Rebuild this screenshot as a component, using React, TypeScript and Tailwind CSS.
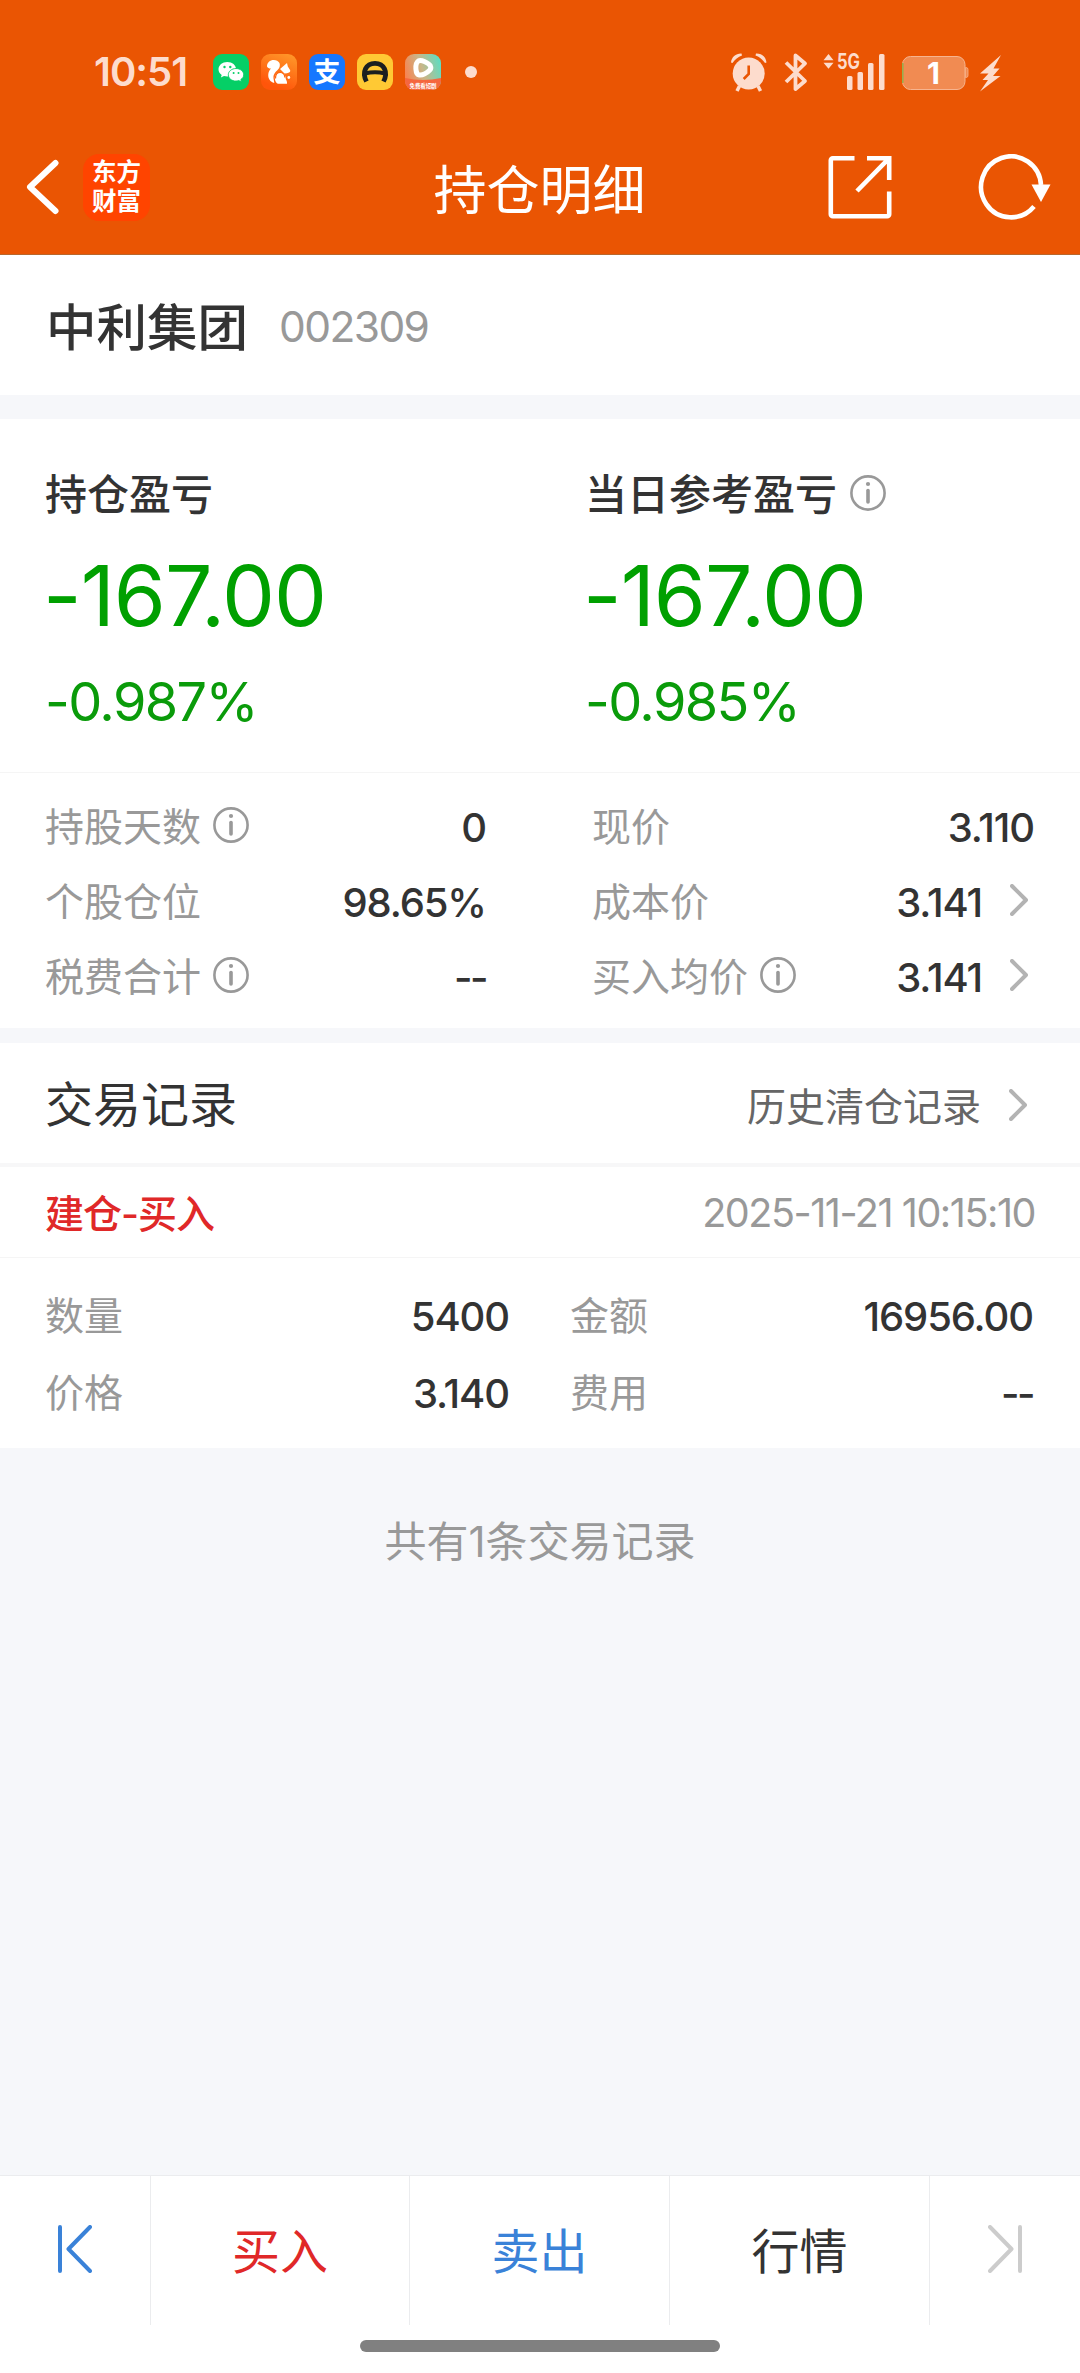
import { ReactNode } from "react";
import clsx from "clsx";

interface Metric {
	label: string;
	value: string;
	info?: boolean;
	link?: boolean;
}

const leftMetrics: Metric[] = [
	{ label: "持股天数", value: "0", info: true },
	{ label: "个股仓位", value: "98.65%" },
	{ label: "税费合计", value: "--", info: true },
];

const rightMetrics: Metric[] = [
	{ label: "现价", value: "3.110" },
	{ label: "成本价", value: "3.141", link: true },
	{ label: "买入均价", value: "3.141", info: true, link: true },
];

const InfoIcon = () => (
	<svg className="size-9 shrink-0" viewBox="0 0 36 36" fill="none" stroke="#999" strokeWidth="2.6">
		<circle cx="18" cy="18" r="16.6" />
		<circle cx="18" cy="9" r="2.1" fill="#999" stroke="none" />
		<path d="M18 15.5v11.5" strokeWidth="3.6" strokeLinecap="round" />
	</svg>
);

const ChevronRight = () => (
	<svg className="h-8 w-[18px] shrink-0" viewBox="0 0 18 32" fill="none" stroke="#b3b3b3" strokeWidth="4">
		<path d="M2 2l14 14L2 30" strokeLinecap="round" strokeLinejoin="round" />
	</svg>
);

/* ステータスバー */
const StatusBar = () => (
	<div className="flex h-[120px] items-start pl-[94px] pr-[76px] pt-[54px] text-[#fddccd]">
		<span className="w-[119px] text-[40px] font-semibold leading-9 tracking-[-1px]">10:51</span>
		<div className="flex gap-3">
			<svg className="size-9" viewBox="0 0 36 36">
				<rect width="36" height="36" rx="9" fill="#05cf66" />
				<path d="M14.3 8c-5 0-8.8 3.2-8.8 7.3 0 2.3 1.2 4.3 3.2 5.6l-.8 2.7 3.1-1.6c1 .3 2.1.5 3.3.5 5 0 8.8-3.1 8.8-7.2S19.3 8 14.3 8z" fill="#fff" />
				<path d="M23 14.5c-4.3 0-7.7 2.8-7.7 6.3s3.4 6.3 7.7 6.3c1 0 2-.2 2.8-.5l2.7 1.4-.7-2.4c1.8-1.2 2.9-2.9 2.9-4.8 0-3.5-3.4-6.3-7.7-6.3z" fill="#fff" stroke="#05cf66" strokeWidth=".9" />
				<g fill="#05cf66">
					<circle cx="11.5" cy="13" r="1.2" />
					<circle cx="17.3" cy="13" r="1.2" />
					<circle cx="20.6" cy="19" r="1" />
					<circle cx="25.5" cy="19" r="1" />
				</g>
			</svg>
			<svg className="size-9" viewBox="0 0 36 36">
				<defs>
					<linearGradient id="squirrel" x1="1" y1="0" x2=".6" y2="1">
						<stop stopColor="#ff9b2b" />
						<stop offset="1" stopColor="#ff550a" />
					</linearGradient>
				</defs>
				<rect width="36" height="36" rx="9" fill="url(#squirrel)" />
				{/* tail */}
				<path d="M6 12.5C6 8.5 9 6 12.8 6c2.5 0 4.5 1 5.7 3 .8 2.5.3 4.8-1.7 6.8-2.6 2.5-4.6 4.6-4.3 8.4l.8 4.8C9.3 28 6.8 24.5 7.3 20c.3-2.4 1.6-4.3 2.7-5.5-1.5.2-3-.3-4-2z" fill="#fff" />
				{/* head */}
				<path d="M19 15l7-6 .8 3.5 2.4 3.8c.3 1.7-1 2.7-3.2 2.9l-2.5.3z" fill="#fff" />
				{/* body */}
				<path d="M14 25.5c-.8-4 1.5-6.8 5-6.8 3.8 0 5.7 2.5 5.6 5.3 0 1.5 1.9 3 1.4 5.8H17c-1.5-.6-2.7-2-3-4.300z" fill="#fff" />
				<path d="M14.5 24.5c0-4 2-6 4.7-6s4.8 2 4.6 5" fill="none" stroke="#ff650f" strokeWidth="1.2" />
				<circle cx="27.8" cy="23.5" r="1.4" fill="#fff" />
			</svg>
			<span className="flex size-9 items-center justify-center rounded-[9px] bg-[#1677ff] text-[27px] font-bold leading-none text-white">
				支
			</span>
			<svg className="size-9" viewBox="0 0 36 36">
				<rect width="36" height="36" rx="9" fill="#ffc934" />
				<path d="M9.500 27.500C4.500 18 9 9.300 18 9.300s13.500 8.700 8.500 18.200" fill="none" stroke="#1c1f20" strokeWidth="4.8" />
				<path d="M8 19.5q10-2.5 20 0" fill="none" stroke="#1c1f20" strokeWidth="4" />
			</svg>
			<svg className="size-9 overflow-visible" viewBox="0 0 36 36">
				<defs>
					<linearGradient id="player" x1="0" y1=".6" x2="1" y2=".3">
						<stop stopColor="#f98250" />
						<stop offset=".5" stopColor="#c7b78a" />
						<stop offset="1" stopColor="#60dcc0" />
					</linearGradient>
					<clipPath id="playerClip">
						<rect width="36" height="36" rx="9" />
					</clipPath>
				</defs>
				<g clipPath="url(#playerClip)">
					<rect width="36" height="36" fill="url(#player)" />
					<path d="M0 24q18 4 36 0v12H0z" fill="#f5663f" />
				</g>
				<path d="M13.300 7c3-1.600 10.500 2 12 4.800.8 1.700.6 3.200-.7 4.500-2.600 2.600-7 5-10.400 4.700-4-.5-4.500-11.500-.9-14z" fill="none" stroke="#fff" strokeWidth="5" strokeLinejoin="round" />
				<text x="18" y="33.5" fontSize="5.4" fontWeight="700" textAnchor="middle" fill="#fff">
					免费看短剧
				</text>
			</svg>
		</div>
		<span className="ml-6 mt-3 size-3 rounded-full bg-[#fddccd]" />
		<svg className="ml-auto h-[38px] w-[274px] overflow-visible" viewBox="0 0 274 38" fill="currentColor">
			{/* alarm */}
			<circle cx="18.7" cy="19.5" r="16" />
			<path d="M1 8.5C1.5 3 6 -.8 11.5 -.5L12 1.5C8 3 5 5.5 2.5 9zM36.5 8.5C36 3 31.5 -.8 26 -.5L25.5 1.5C29.5 3 32.5 5.5 35 9z" />
			<path d="M9.5 32l-2.5 5M28 32l2.5 5" stroke="currentColor" strokeWidth="3.5" />
			<path d="M18.7 11.5v8.5l-5 5" fill="none" stroke="#ea5503" strokeWidth="2.6" />
			{/* bluetooth */}
			<path d="M56 8.5l19 18.5-9.5 8V1.5l9.5 8L56 28" fill="none" stroke="currentColor" strokeWidth="3.8" strokeLinejoin="round" />
			{/* signal */}
			<path d="M93.5 6.2L98.5 0l5 6.2zM93.5 8.8h10l-5 6z" />
			<text x="107" y="14.5" fontSize="21" fontWeight="700" textLength="23" lengthAdjust="spacingAndGlyphs">
				5G
			</text>
			<rect x="117" y="22" width="5.5" height="14" rx="1.5" />
			<rect x="127.5" y="18" width="5.5" height="18" rx="1.5" />
			<rect x="138" y="9" width="5.5" height="27" rx="1.5" />
			<rect x="149" y="0" width="5.5" height="36" rx="1.5" />
			{/* battery */}
			<rect x="172.5" y="2.5" width="62.5" height="33" rx="8" fill="#f18b52" stroke="#f7b48f" />
			<path d="M235.500 13.500h.5a2 2 0 0 1 2 2v6a2 2 0 0 1-2 2h-.5z" fill="#f18b52" stroke="#f7b48f" strokeWidth=".8" />
			<path d="M172.8 9v20" stroke="#8db04a" strokeWidth="1.4" />
			<text x="203.5" y="30" fontSize="30" fontWeight="700" textAnchor="middle" fill="#fff">
				1
			</text>
			<path d="M271 1L250 19.5h8.500l-6 6.500h5.500l-8 11.500L270.500 22H263l6.500-7.500h-6z" />
		</svg>
	</div>
);

/* ヘッダー */
const Header = () => (
	<header className="h-[255px] border-b border-[#b9672c] bg-[#ea5503]">
		<StatusBar />
		<div className="flex h-[134px] items-center justify-between pl-[26px] pr-[29px] text-white">
			<div className="flex w-[230px] items-center gap-[23px]">
				<svg className="h-14 w-[34px]" viewBox="0 0 34 56" fill="none" stroke="currentColor" strokeWidth="6">
					<path d="M29.5 4L4 28l25.5 24" strokeLinecap="round" strokeLinejoin="round" />
				</svg>
				<div className="flex h-[67px] w-[67px] flex-col items-center justify-center rounded-2xl bg-[#ff4400] text-[24.5px] font-bold leading-[29px]">
					<span>东方</span>
					<span>财富</span>
				</div>
			</div>
			<h1 className="ml-0.5 mt-2 text-[53px] leading-none">持仓明细</h1>
			<div className="flex w-[230px] items-center justify-end gap-[86px]">
				<svg className="h-[66px] w-[66px]" viewBox="0 0 66 66" fill="none" stroke="currentColor" strokeWidth="4.6">
					<path d="M28.5 4.3H6.800a2 2 0 0 0-2 2v54a2 2 0 0 0 2 2h54.400a2 2 0 0 0 2-2V37.500M41 4.300h22.200V26M63 4.300L31 37" />
				</svg>
				<svg className="h-[66px] w-[73px]" viewBox="0 0 73 66">
					<path d="M63 31A30 30.5 0 1 0 56 52.500" fill="none" stroke="currentColor" strokeWidth="4.6" />
					<path d="M53.5 30.5h19L63 48z" fill="currentColor" />
				</svg>
			</div>
		</div>
	</header>
);

interface ProfitProps {
	title: string;
	amount: string;
	rate: string;
	info?: boolean;
}

const Profit = ({ title, amount, rate, info }: ProfitProps) => (
	<div className="w-1/2 pl-[45px] pt-[51px]">
		<div className="flex h-[50px] items-center gap-[13px] text-[42px] font-medium leading-[50px]">
			<span>{title}</span>
			{info && (
				<span className="-mt-1">
					<InfoIcon />
				</span>
			)}
		</div>
		<p className="-ml-0.5 mt-[26px] text-[84px] leading-[100px] tracking-[-1px] text-[#00a000]">{amount}</p>
		<p className="mt-6 text-[54px] leading-[64px] tracking-[-1.6px] text-[#0a9b0a]">{rate}</p>
	</div>
);

const Value = ({ children }: { children: string }) => (
	<span
		className={clsx(
			"ml-auto text-[40px] font-medium",
			children === "--" ? "tracking-[-2.5px]" : "tracking-[-1.1px]",
		)}
	>
		{children}
	</span>
);

const MetricRow = ({ label, value, info, link }: Metric) => (
	<div className="flex h-[75px] items-center">
		<span className="text-[39px] text-[#999]">{label}</span>
		{info && (
			<span className="-mt-[5px] ml-[12px]">
				<InfoIcon />
			</span>
		)}
		<Value>{value}</Value>
		{link && (
			<span className="-mt-[5px] ml-[28px] mr-[6px]">
				<ChevronRight />
			</span>
		)}
	</div>
);

const RecordCell = ({ label, value }: Metric) => (
	<div className="flex h-[77px] items-center">
		<span className="text-[39px] text-[#999]">{label}</span>
		<Value>{value}</Value>
	</div>
);

const Tab = ({ className, children }: { className: string; children: ReactNode }) => (
	<button className={clsx("flex h-[149px] items-center justify-center", className)}>{children}</button>
);

export default function App() {
	return (
		<div className="flex h-[2373px] w-[1080px] flex-col bg-[#f6f7fa] font-['Inter','Noto_Sans_CJK_SC',sans-serif] text-[#333]">
			<Header />

			{/* 銘柄 */}
			<section className="flex h-[140px] items-center gap-[31px] bg-white pl-[46px] pt-1.5">
				<h2 className="text-[50.5px] font-medium">中利集团</h2>
				<span className="-mt-0.5 text-[42.5px] tracking-[-1.6px] text-[#999]">002309</span>
			</section>

			{/* 損益 */}
			<section className="mt-6 flex h-[354px] border-b border-[#f5f5f5] bg-white">
				<Profit title="持仓盈亏" amount="-167.00" rate="-0.987%" />
				<Profit title="当日参考盈亏" amount="-167.00" rate="-0.985%" info />
			</section>
			<section className="flex h-[255px] justify-between bg-white pl-[45px] pr-[46px] pt-[17px]">
				<div className="w-[441px]">
					{leftMetrics.map((item) => (
						<MetricRow key={item.label} {...item} />
					))}
				</div>
				<div className="w-[442px]">
					{rightMetrics.map((item) => (
						<MetricRow key={item.label} {...item} />
					))}
				</div>
			</section>

			{/* 取引履歴 */}
			<section className="mt-[15px] bg-white">
				<div className="flex h-[124px] items-center justify-between border-b-4 border-[#f7f7f8] pl-[45px] pr-[53px] pt-1">
					<h2 className="text-[48px]">交易记录</h2>
					<div className="flex items-center gap-[28px] text-[39px] text-[#666]">
						<span className="mt-1">历史清仓记录</span>
						<ChevronRight />
					</div>
				</div>
				<div className="flex h-[91px] items-center justify-between border-b border-[#f5f5f5] pl-[45px] pr-[45px] pt-1">
					<span className="text-[39px] font-medium tracking-[-1px] text-[#e02828]">建仓-买入</span>
					<span className="text-[39.5px] tracking-[-1.45px] text-[#999]">2025-11-21 10:15:10</span>
				</div>
				<div className="grid h-[190px] grid-cols-[464px_463px] content-start gap-x-[61px] pl-[45px] pt-5">
					<RecordCell label="数量" value="5400" />
					<RecordCell label="金额" value="16956.00" />
					<RecordCell label="价格" value="3.140" />
					<RecordCell label="费用" value="--" />
				</div>
			</section>

			<p className="mt-[68px] text-center text-[42px] leading-[52px] text-[#999]">共有1条交易记录</p>

			{/* 下部メニュー */}
			<nav className="mt-auto h-[198px] border-t border-[#ebecee] bg-white">
				<div className="flex divide-x divide-[#ebecee] text-[48px]">
					<Tab className="w-[151px] pb-1 text-[#3a82d8]">
						<svg className="h-12 w-[34px]" viewBox="0 0 34 48" fill="none" stroke="currentColor" strokeWidth="4" strokeLinecap="round">
							<path d="M2 2v44M32 2L10.5 24 32 46" strokeLinejoin="round" />
						</svg>
					</Tab>
					<Tab className="w-[259px] pt-0.5 text-[#e02828]">买入</Tab>
					<Tab className="w-[260px] pt-0.5 text-[#3a82d8]">卖出</Tab>
					<Tab className="w-[260px] pt-0.5">行情</Tab>
					<Tab className="w-[150px] pb-1 text-[#ccc]">
						<svg className="h-12 w-[34px]" viewBox="0 0 34 48" fill="none" stroke="currentColor" strokeWidth="4" strokeLinecap="round">
							<path d="M32 2v44M2 2l21.5 22L2 46" strokeLinejoin="round" />
						</svg>
					</Tab>
				</div>
				<div className="mx-auto mt-[15px] h-3 w-[360px] rounded-full bg-[#808080]" />
			</nav>
		</div>
	);
}
